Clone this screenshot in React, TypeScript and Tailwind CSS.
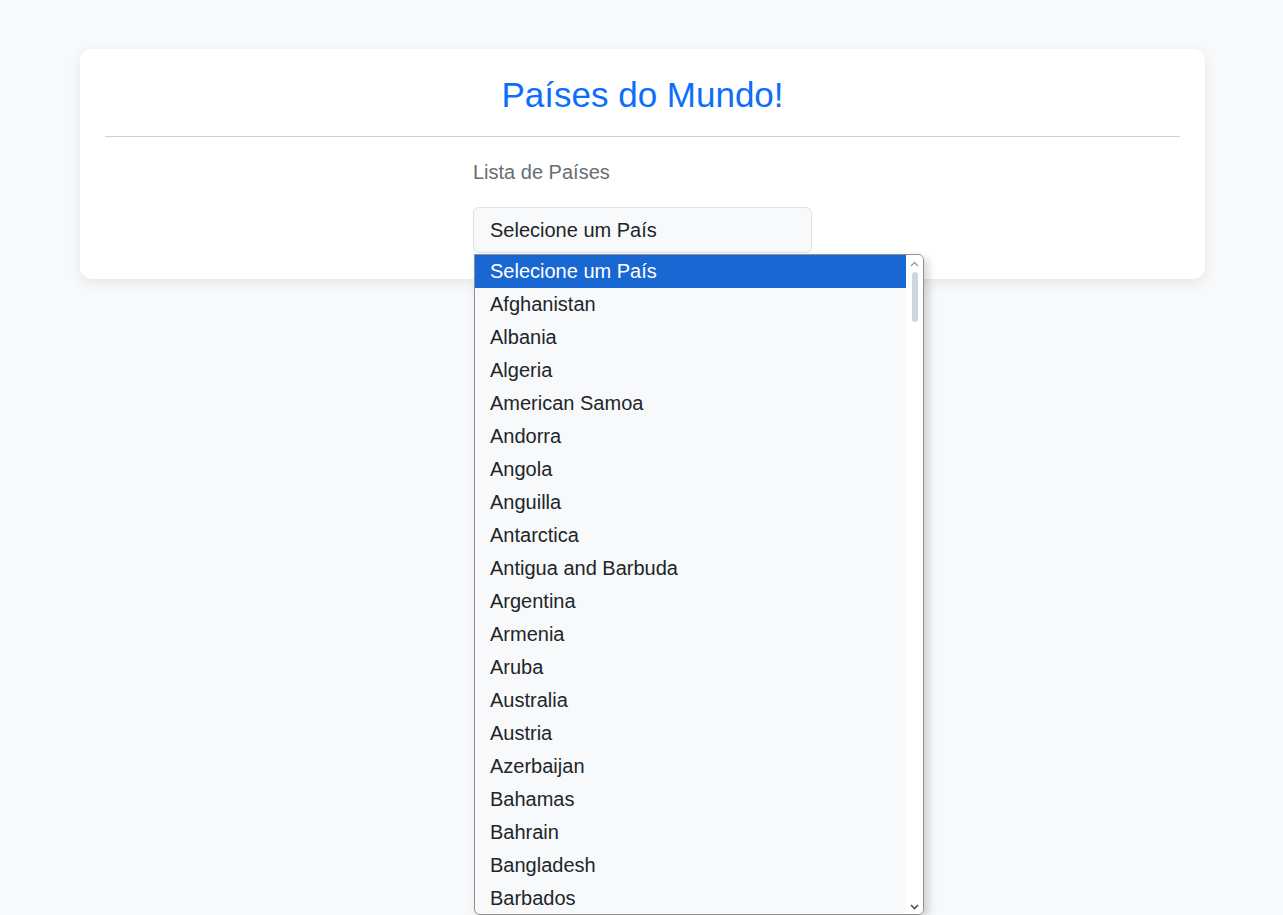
const countries = [
  'Afghanistan',
  'Albania',
  'Algeria',
  'American Samoa',
  'Andorra',
  'Angola',
  'Anguilla',
  'Antarctica',
  'Antigua and Barbuda',
  'Argentina',
  'Armenia',
  'Aruba',
  'Australia',
  'Austria',
  'Azerbaijan',
  'Bahamas',
  'Bahrain',
  'Bangladesh',
  'Barbados',
];

/** open native-looking option list */
const CountryList = () => {
  return (
    <div className="absolute left-[1px] top-[47px] z-10 flex w-[450px] h-[661px] overflow-hidden bg-[#f8f9fa] border border-[#8f8f8f] rounded-b-[6px] rounded-tr-[6px] shadow-[4px_4px_10px_rgba(0,0,0,0.18)]">
      <ul className="flex-1 flex flex-col">
        <li className="h-[33px] flex items-center px-[15px] bg-[#1967d2] text-white">
          Selecione um País
        </li>
        {countries.map((name) => (
          <li key={name} className="h-[33px] flex items-center px-[15px] text-[#212529]">
            {name}
          </li>
        ))}
      </ul>
      <div className="w-[17px] bg-white flex flex-col items-center">
        <svg width="9" height="6" viewBox="0 0 9 6" className="mt-[6px]">
          <path d="M1 5 L4.5 1.5 L8 5" fill="none" stroke="#a3a3a3" strokeWidth="1.5" />
        </svg>
        <div className="mt-[5px] w-[6px] h-[50px] rounded-full bg-[#cdd6df]" />
        <div className="flex-1" />
        <svg width="9" height="6" viewBox="0 0 9 6" className="mb-[4px]">
          <path d="M1 1 L4.5 4.5 L8 1" fill="none" stroke="#505050" strokeWidth="1.6" />
        </svg>
      </div>
    </div>
  );
};

export default function App() {
  return (
    <div
      className="min-h-screen bg-[#f8f9fa] pt-[49px] pl-[80px] pr-[78px] text-[20px]"
      style={{ fontFamily: '"Liberation Sans", Arial, sans-serif' }}
    >
      <div className="bg-white rounded-xl shadow-[0_4px_14px_rgba(0,0,0,0.08)] px-[25px] pt-[24px] pb-[26px]">
        <h1 className="text-center text-[35px] leading-[44px] text-[#0d6efd]">Países do Mundo!</h1>
        <hr className="mt-[19px] border-t border-[#d2d2d2]" />
        <div className="mx-auto w-[339px] pt-[23px]">
          <label className="block text-[#676e75] leading-[24px]">Lista de Países</label>
          <div className="relative mt-[23px]">
            <div className="h-[46px] flex items-center px-[16px] bg-[#f8f9fa] border border-[#dee2e6] rounded-[6px] text-[#212529]">
              Selecione um País
            </div>
            <CountryList />
          </div>
        </div>
      </div>
    </div>
  );
}
